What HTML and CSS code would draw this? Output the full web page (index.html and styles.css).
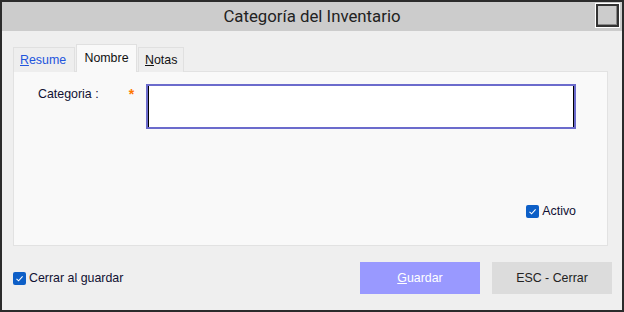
FILE: index.html
```html
<!DOCTYPE html>
<html lang="es">
<head>
  <meta charset="UTF-8">
  <meta name="viewport" content="width=device-width, initial-scale=1.0">
  <title>Categoría del Inventario</title>
  <link rel="stylesheet" href="styles.css">
</head>
<body>
  <div class="window">
    <div class="titlebar">
      <div class="title">Categoría del Inventario</div>
      <button class="close-box" aria-label="Cerrar"></button>
    </div>

    <div class="content">
      <div class="tabs">
        <div class="tab link"><u>R</u>esume</div>
        <div class="tab active">Nombre</div>
        <div class="tab notes"><u>N</u>otas</div>
      </div>

      <div class="panel">
        <div class="form-row">
          <label class="label" for="categoria">Categoria :</label>
          <span class="required">*</span>
          <input type="text" id="categoria" class="input-field">
        </div>
        <div class="active-row">
          <label class="check">
            <span class="check-box"><svg viewBox="0 0 13 13" width="13" height="13"><path d="M3.5 6.8 L5.6 8.8 L9.6 4.4" fill="none" stroke="#ffffff" stroke-width="1.1"/></svg></span>
            Activo
          </label>
        </div>
      </div>

      <div class="footer">
        <label class="check">
          <span class="check-box"><svg viewBox="0 0 13 13" width="13" height="13"><path d="M3.5 6.8 L5.6 8.8 L9.6 4.4" fill="none" stroke="#ffffff" stroke-width="1.1"/></svg></span>
          Cerrar al guardar
        </label>
        <div class="buttons">
          <button class="button save"><u>G</u>uardar</button>
          <button class="button cancel">ESC - Cerrar</button>
        </div>
      </div>
    </div>
  </div>
</body>
</html>
```

FILE: styles.css
```css
body {
  margin: 0;
  font-family: 'Liberation Sans', Arial, sans-serif;
  font-size: 12.4px;
  color: #111133;
}

.window {
  width: 624px;
  height: 312px;
  box-sizing: border-box;
  border: 2px solid #2b2b2b;
  background: #efefef;
  display: flex;
  flex-direction: column;
}

.titlebar {
  height: 29px;
  background: #cccccc;
  display: grid;
  grid-template-columns: 1fr auto 1fr;
  align-items: start;
}

.title {
  grid-column: 2;
  font-family: 'Roboto', sans-serif;
  font-size: 16.8px;
  line-height: 29px;
  color: #222222;
}

.close-box {
  grid-column: 3;
  justify-self: end;
  margin: 2px 3px 0 0;
  width: 23px;
  height: 23px;
  padding: 0;
  box-sizing: border-box;
  background: #cccccc;
  border: 2px solid #333333;
  outline: 1px solid #ffffff;
  box-shadow: inset -1px -1px 0 #888888;
}

.content {
  flex: 1;
  display: flex;
  flex-direction: column;
  padding: 13px 10px 0 11px;
}

.tabs {
  display: flex;
  gap: 1px;
  align-items: flex-end;
  height: 28px;
  margin-bottom: -1px;
  position: relative;
  z-index: 1;
}

.tab {
  height: 25px;
  box-sizing: border-box;
  padding: 0 6px;
  line-height: 24px;
  background: #eeeeee;
  border: 1px solid #e0e0e0;
  border-bottom: none;
  color: #111111;
}

.tab.link {
  width: 62px;
  color: #2255dd;
}

.tab.notes {
  width: 46px;
}

.tab.active {
  height: 28px;
  width: 61px;
  background: #f9f9f9;
  line-height: 26px;
  text-align: center;
}

.panel {
  height: 175px;
  box-sizing: border-box;
  margin-right: 4px;
  background: #f9f9f9;
  border: 1px solid #e2e2e2;
  display: flex;
  flex-direction: column;
  padding: 12px 31px 27px 24px;
}

.form-row {
  display: flex;
  align-items: flex-start;
}

.label {
  width: 91px;
  margin-top: 3px;
}

.required {
  width: 17px;
  color: #ff7700;
  font-weight: bold;
  font-size: 14px;
  line-height: 14px;
  margin-top: 3px;
}

.input-field {
  width: 431px;
  height: 45px;
  box-sizing: border-box;
  border: 2px solid #6b6bcc;
  box-shadow: inset 1px 0 0 #000000, inset -1px 0 0 #000000;
  background: #ffffff;
  outline: none;
  margin: 0;
}

.active-row {
  margin-top: auto;
  display: flex;
  justify-content: flex-end;
}

.check {
  display: flex;
  align-items: center;
  gap: 3px;
  color: #111133;
}

.check-box {
  width: 13px;
  height: 13px;
  border-radius: 2px;
  background: #0d5fc7;
  display: block;
}

.check-box svg {
  display: block;
}

.footer {
  display: flex;
  justify-content: space-between;
  align-items: center;
  margin-top: 16px;
}

.buttons {
  display: flex;
  gap: 12px;
}

.button {
  width: 120px;
  height: 32px;
  border: none;
  font-family: 'Liberation Sans', Arial, sans-serif;
  font-size: 12.4px;
  padding: 0;
}

.button.save {
  background: #9999ff;
  color: #ffffff;
}

.button.cancel {
  background: #dcdcdc;
  color: #222222;
}
```
